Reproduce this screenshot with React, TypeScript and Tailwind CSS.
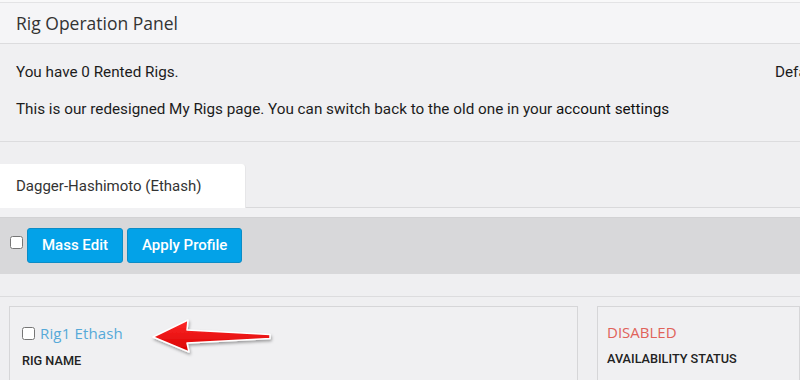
import React from "react";

const OPEN = "font-['Open_Sans','Liberation_Sans',sans-serif]";

function RedArrow() {
  return (
    <svg className="absolute left-[146px] top-[314px]" width="132" height="46" viewBox="0 0 132 46">
      <defs>
        <linearGradient id="ar" x1="0" y1="0" x2="0" y2="1">
          <stop offset="0" stopColor="#ff2a2a" />
          <stop offset="1" stopColor="#d80000" />
        </linearGradient>
        <filter id="sh" x="-10%" y="-30%" width="130%" height="160%">
          <feDropShadow dx="1" dy="2" stdDeviation="1.5" floodColor="#000" floodOpacity="0.35" />
        </filter>
      </defs>
      <polygon
        points="7,23 42,6 41,16 124,20.5 124,24.5 41,29 43,38"
        fill="url(#ar)"
        stroke="#fff"
        strokeWidth="1.5"
        strokeLinejoin="round"
        filter="url(#sh)"
      />
    </svg>
  );
}

export default function App() {
  return (
    <div className="relative w-full h-[380px] overflow-hidden bg-[#efeff1] font-['Roboto','Liberation_Sans',sans-serif] text-[#222]">
      {/* top edge */}
      <div className="h-[3px] bg-[#f8f8f9] border-b border-[#e3e3e5]" />

      {/* panel header */}
      <div className={`h-[41px] bg-[#f5f5f7] border-b border-[#dcdcde] px-4 flex items-center text-[17.5px] text-[#333] ${OPEN}`}>
        Rig Operation Panel
      </div>

      {/* panel body */}
      <div className="h-[98px] bg-[#f0f0f2] border-b border-[#dcdcde] px-4 text-[15.25px] text-[#1c1c1c]">
        <div className="flex justify-between pt-[17px]">
          <span>You have 0 Rented Rigs.</span>
          <span className="w-[9px] whitespace-nowrap">Default</span>
        </div>
        <p className="mt-[14px]">
          This is our redesigned My Rigs page. You can switch back to the old one in your <span className="text-[#111]">account settings</span>
        </p>
      </div>

      <div className="h-[22px]" />

      {/* tabs */}
      <div className="flex h-[44px]">
        <div className="w-[246px] bg-white rounded-tr-[4px] px-4 flex items-center text-[15px] text-[#333] border-r border-[#e6e6e8]">
          Dagger-Hashimoto (Ethash)
        </div>
        <div className="flex-1 border-b border-[#d9d9db]" />
      </div>
      <div className="h-[10px] bg-[#f1f1f3] border-b border-[#d2d2d4]" />

      {/* toolbar */}
      <div className="h-[56px] bg-[#d8d8da] flex items-center pl-[10px] pb-[1px]">
        <input type="checkbox" className="w-[13px] h-[13px] mr-[4px] mb-[6px]" />
        <button className="h-[35px] px-[14px] rounded-[3px] bg-[#03a2e8] border border-[#0b8cc6] text-white text-[15px] font-medium">
          Mass Edit
        </button>
        <button className="h-[35px] px-[14px] ml-[4px] rounded-[3px] bg-[#03a2e8] border border-[#0b8cc6] text-white text-[15px] font-medium">
          Apply Profile
        </button>
      </div>

      <div className="h-[23px] border-b border-[#dcdcde] bg-[#efeff1]" />

      {/* rig cards */}
      <div className="flex gap-[19px] pl-[9px] pt-[9px]">
        <div className="w-[569px] h-[80px] border border-[#d6d6d8] bg-[#f0f0f2] pl-[12px] pt-[15px]">
          <div className="flex items-center gap-[5px]">
            <input type="checkbox" className="w-[13px] h-[13px]" />
            <span className={`text-[15px] text-[#56a9d8] tracking-[0.15px] ${OPEN}`}>Rig1 Ethash</span>
          </div>
          <div className="mt-[6px] text-[12.7px] font-medium text-[#222]">RIG NAME</div>
        </div>
        <div className="flex-1 h-[80px] border border-[#d6d6d8] bg-[#f0f0f2] pl-[9px] pt-[14px]">
          <div className={`text-[15px] text-[#e0625a] ${OPEN}`}>DISABLED</div>
          <div className="mt-[5px] text-[12.7px] font-medium text-[#222]">AVAILABILITY STATUS</div>
        </div>
      </div>

      <RedArrow />
    </div>
  );
}
